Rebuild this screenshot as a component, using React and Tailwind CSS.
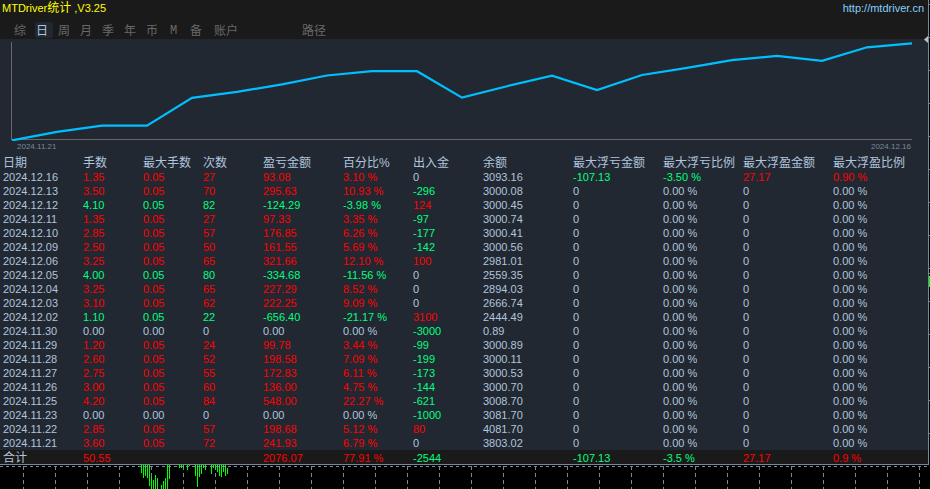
const TABS = ['综', '日', '周', '月', '季', '年', '币', 'M', '备'];

const COLUMNS = [
  { title: '日期', width: 'w-[83px]' },
  { title: '手数', width: 'w-[60px]' },
  { title: '最大手数', width: 'w-[60px]' },
  { title: '次数', width: 'w-[60px]' },
  { title: '盈亏金额', width: 'w-[80px]' },
  { title: '百分比%', width: 'w-[70px]' },
  { title: '出入金', width: 'w-[70px]' },
  { title: '余额', width: 'w-[90px]' },
  { title: '最大浮亏金额', width: 'w-[90px]' },
  { title: '最大浮亏比例', width: 'w-[80px]' },
  { title: '最大浮盈金额', width: 'w-[90px]' },
  { title: '最大浮盈比例', width: '' },
];

// date, lots, max lots, trades, profit, percent, deposit/withdrawal, balance
const DAYS = [
  ['2024.12.16', '1.35', '0.05', '27', '93.08', '3.10', '0', '3093.16'],
  ['2024.12.13', '3.50', '0.05', '70', '295.63', '10.93', '-296', '3000.08'],
  ['2024.12.12', '4.10', '0.05', '82', '-124.29', '-3.98', '124', '3000.45'],
  ['2024.12.11', '1.35', '0.05', '27', '97.33', '3.35', '-97', '3000.74'],
  ['2024.12.10', '2.85', '0.05', '57', '176.85', '6.26', '-177', '3000.41'],
  ['2024.12.09', '2.50', '0.05', '50', '161.55', '5.69', '-142', '3000.56'],
  ['2024.12.06', '3.25', '0.05', '65', '321.66', '12.10', '100', '2981.01'],
  ['2024.12.05', '4.00', '0.05', '80', '-334.68', '-11.56', '0', '2559.35'],
  ['2024.12.04', '3.25', '0.05', '65', '227.29', '8.52', '0', '2894.03'],
  ['2024.12.03', '3.10', '0.05', '62', '222.25', '9.09', '0', '2666.74'],
  ['2024.12.02', '1.10', '0.05', '22', '-656.40', '-21.17', '3100', '2444.49'],
  ['2024.11.30', '0.00', '0.00', '0', '0.00', '0.00', '-3000', '0.89'],
  ['2024.11.29', '1.20', '0.05', '24', '99.78', '3.44', '-99', '3000.89'],
  ['2024.11.28', '2.60', '0.05', '52', '198.58', '7.09', '-199', '3000.11'],
  ['2024.11.27', '2.75', '0.05', '55', '172.83', '6.11', '-173', '3000.53'],
  ['2024.11.26', '3.00', '0.05', '60', '136.00', '4.75', '-144', '3000.70'],
  ['2024.11.25', '4.20', '0.05', '84', '548.00', '22.27', '-621', '3008.70'],
  ['2024.11.23', '0.00', '0.00', '0', '0.00', '0.00', '-1000', '3081.70'],
  ['2024.11.22', '2.85', '0.05', '57', '198.68', '5.12', '80', '4081.70'],
  ['2024.11.21', '3.60', '0.05', '72', '241.93', '6.79', '0', '3803.02'],
];

// x, top, bottom
const VOLUME = [
  [141, 0, 8], [143, 0, 13], [145, 0, 11], [147, 0, 13], [149, 0, 21],
  [151, 12, 24], [153, 15, 24], [155, 10, 24], [157, 13, 24], [161, 20, 24],
  [163, 16, 24], [165, 13, 24], [167, 0, 24], [169, 0, 14],
  [179, 0, 3], [181, 0, 3], [183, 0, 3], [187, 0, 5], [189, 0, 1],
  [195, 0, 11], [197, 0, 22], [199, 0, 12], [201, 0, 9], [203, 0, 3], [205, 0, 5],
  [211, 0, 9], [213, 0, 3], [215, 0, 4], [217, 0, 7], [219, 0, 11],
  [221, 0, 12], [223, 0, 7], [225, 0, 11], [227, 3, 9],
];

const GRID_X = Array.from({ length: 29 }, (_, i) => 23 + i * 32);
const TICKS_Y = Array.from({ length: 14 }, (_, i) => 4 + i * 33);

function tone(value) {
  const n = parseFloat(value);
  if (n > 0) return 'text-[#ff0000]';
  if (n < 0) return 'text-[#00ff7f]';
  return '';
}

function Header() {
  return (
    <header className="bg-[#1a1a1a] h-[39px]">
      <div className="flex justify-between h-[22px] pl-0.5 pr-1 leading-4">
        <h1 className="text-[11px] text-[#ffff00]">
          MTDriver<span className="text-[12px]">统计</span> ,V3.25
        </h1>
        <a href="http://mtdriver.cn" className="text-[11px] text-[#87cefa]">http://mtdriver.cn</a>
      </div>
      <nav className="flex gap-1 pl-[13px] text-[12px] leading-[18px] text-[#696969]">
        {TABS.map((tab) => (
          <button
            key={tab}
            type="button"
            className={
              tab === '日'
                ? 'w-[18px] h-4 pl-px text-left rounded-xs bg-[#222831] text-[#b0c4de]'
                : tab === 'M'
                  ? "w-[18px] h-4 pl-[3px] text-left font-['Liberation_Mono',monospace]"
                  : 'w-[18px] h-4 pl-px text-left'
            }
          >
            {tab}
          </button>
        ))}
        <button type="button" className="h-4 w-[84px] pl-[3px] text-left">账户</button>
        <button type="button" className="h-4 pl-[3px] text-left">路径</button>
      </nav>
    </header>
  );
}

function GrowthChart() {
  const percents = DAYS.map((d) => parseFloat(d[5])).reverse();
  const total = percents.reduce((a, b) => a + b, 0);
  let sum = 0;
  const points = [0, ...percents].map((p, i) => {
    sum += p;
    return `${12 + i * 45},${(101.4 - (sum / total) * 97).toFixed(1)}`;
  });

  return (
    <section className="h-[117px]">
      <svg className="block w-full h-[102px]" viewBox="0 0 928 102" preserveAspectRatio="none">
        <rect x="11" y="3" width="1" height="98" fill="#696969" />
        <rect x="11" y="100" width="901" height="1" fill="#696969" />
        <polyline points={points.join(' ')} fill="none" stroke="#00bfff" strokeWidth="2.2" />
      </svg>
      <div className="flex justify-between px-[17px] text-[8px] leading-3 text-[#778899]">
        <span>{DAYS[DAYS.length - 1][0]}</span>
        <span>{DAYS[0][0]}</span>
      </div>
    </section>
  );
}

function StatsTable() {
  return (
    <table className="w-full table-fixed border-collapse text-left text-[11px] leading-[14px] text-[#b0c4de] whitespace-nowrap">
      <colgroup>
        {COLUMNS.map((c) => <col key={c.title} className={c.width} />)}
      </colgroup>
      <thead>
        <tr className="h-[14px] text-[12px]">
          {COLUMNS.map((c) => (
            <th key={c.title} className="p-0 first:pl-[3px] font-normal">{c.title}</th>
          ))}
        </tr>
      </thead>
      <tbody>
        {DAYS.map(([date, lots, maxLots, count, profit, percent, flow, balance], i) => (
          <tr key={date} className="h-[14px]">
            <td className="p-0 pl-[3px]">{date}</td>
            <td className={`p-0 ${tone(profit)}`}>{lots}</td>
            <td className={`p-0 ${tone(profit)}`}>{maxLots}</td>
            <td className={`p-0 ${tone(profit)}`}>{count}</td>
            <td className={`p-0 ${tone(profit)}`}>{profit}</td>
            <td className={`p-0 ${tone(profit)}`}>{percent} %</td>
            <td className={`p-0 ${tone(flow)}`}>{flow}</td>
            <td className="p-0">{balance}</td>
            <td className={`p-0 ${i === 0 ? 'text-[#00ff7f]' : ''}`}>{i === 0 ? '-107.13' : '0'}</td>
            <td className={`p-0 ${i === 0 ? 'text-[#00ff7f]' : ''}`}>{i === 0 ? '-3.50 %' : '0.00 %'}</td>
            <td className={`p-0 ${i === 0 ? 'text-[#ff0000]' : ''}`}>{i === 0 ? '27.17' : '0'}</td>
            <td className={`p-0 ${i === 0 ? 'text-[#ff0000]' : ''}`}>{i === 0 ? '0.90 %' : '0.00 %'}</td>
          </tr>
        ))}
      </tbody>
      <tfoot className="leading-3">
        <tr className="h-[14px] bg-[#1a1a1a] *:p-0 *:pt-0.5">
          <td><span className="pl-[3px] text-[12px]">合计</span></td>
          <td className="text-[#ff0000]">50.55</td>
          <td />
          <td />
          <td className="text-[#ff0000]">2076.07</td>
          <td className="text-[#ff0000]">77.91 %</td>
          <td className="text-[#00ff7f]">-2544</td>
          <td />
          <td className="text-[#00ff7f]">-107.13</td>
          <td className="text-[#00ff7f]">-3.5 %</td>
          <td className="text-[#ff0000]">27.17</td>
          <td className="text-[#ff0000]">0.9 %</td>
        </tr>
      </tfoot>
    </table>
  );
}

function PriceScale() {
  return (
    <svg className="block w-px shrink-0 self-stretch" shapeRendering="crispEdges">
      {TICKS_Y.map((y) => <rect key={y} x="0" y={y} width="1" height="1" fill="#778899" />)}
      <rect x="0" y="273" width="1" height="1" fill="#778899" />
      <rect x="0" y="276" width="1" height="11" fill="#00ff00" />
    </svg>
  );
}

function VolumeStrip() {
  return (
    <svg className="block w-full h-6" shapeRendering="crispEdges">
      <line x1="0" x2="100%" y1="1.5" y2="1.5" stroke="#778899" strokeDasharray="3 3" />
      {GRID_X.map((x) => (
        <line key={x} x1={x + 0.5} x2={x + 0.5} y1="1" y2="24" stroke="#778899" strokeDasharray="4 3" />
      ))}
      {VOLUME.map(([x, top, bottom]) => (
        <rect key={x} x={x} y={top} width="1" height={bottom - top} fill="#00ff00" />
      ))}
    </svg>
  );
}

export default function App() {
  return (
    <div className="min-h-screen overflow-hidden bg-black font-['Liberation_Sans','Noto_Sans_CJK_SC',sans-serif]">
      <div className="flex">
        <main className="relative min-w-0 flex-1 bg-[#222831] border-r border-b border-[#778899]">
          <Header />
          <GrowthChart />
          <StatsTable />
          <svg className="absolute right-0 top-9 w-1 h-[7px]" viewBox="0 0 4 7">
            <path d="M4 0v7L0 3.5z" fill="#c0c0c0" />
          </svg>
        </main>
        <PriceScale />
      </div>
      <VolumeStrip />
    </div>
  );
}
